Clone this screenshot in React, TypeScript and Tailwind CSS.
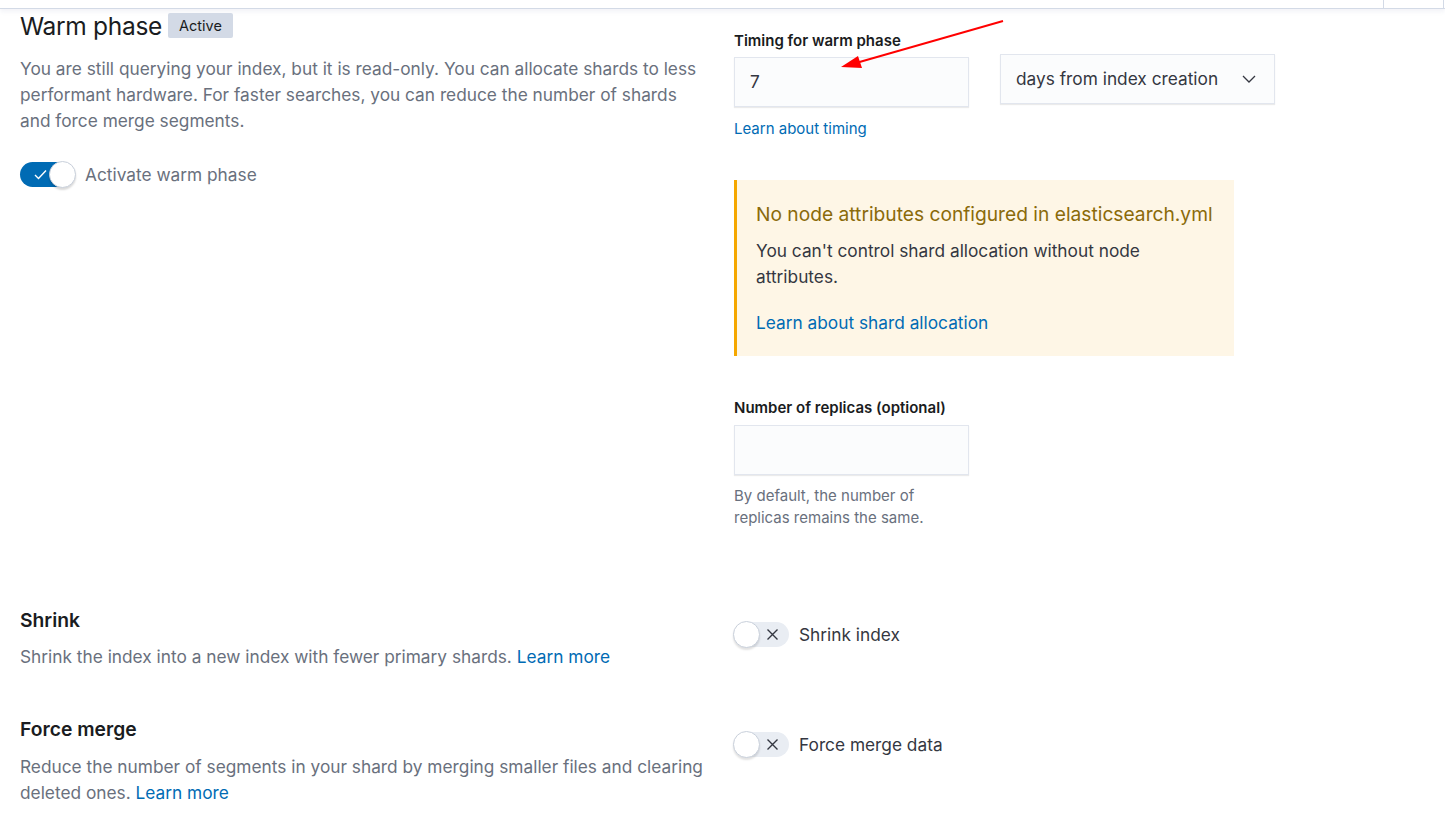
import React from "react";

const font = { fontFamily: "Inter, 'Noto Sans', sans-serif" };

const Switch = ({ on, label, dark }: { on: boolean; label: string; dark?: boolean }) => (
  <div className="flex items-center gap-[10px]">
    <div
      className={`relative h-[25px] w-[55px] shrink-0 rounded-full ${on ? "bg-[#006bb4]" : "bg-[#e9edf3]"}`}
    >
      {on ? (
        <>
          <svg className="absolute left-[14px] top-[7px]" width="13" height="11" viewBox="0 0 13 11" fill="none">
            <path d="M1 6 L4.5 9.5 L12 1.5" stroke="white" strokeWidth="1.4" />
          </svg>
          <div className="absolute right-[-1px] top-[-1px] h-[27px] w-[27px] rounded-full border border-[#c9d0db] bg-white shadow-[0_2px_2px_rgba(0,0,0,0.15)]" />
        </>
      ) : (
        <>
          <div className="absolute left-[-1px] top-[-1px] h-[27px] w-[27px] rounded-full border border-[#c9d0db] bg-white shadow-[0_2px_2px_rgba(0,0,0,0.12)]" />
          <svg className="absolute left-[32px] top-[6px]" width="13" height="13" viewBox="0 0 13 13" fill="none">
            <path d="M1.5 1.5 L11.5 11.5 M11.5 1.5 L1.5 11.5" stroke="#343741" strokeWidth="1.4" />
          </svg>
        </>
      )}
    </div>
    <span className={`text-[17.3px] leading-[24px] ${dark ? "text-[#343741]" : "text-[#69707d]"}`}>{label}</span>
  </div>
);

const FieldBox = ({ children, className }: { children?: React.ReactNode; className?: string }) => (
  <div
    className={`flex items-center border border-[#e2e6ee] bg-[#fbfcfd] shadow-[0_1px_1px_rgba(0,0,0,0.08)] ${className ?? ""}`}
  >
    {children}
  </div>
);

export default function App() {
  return (
    <div className="relative min-h-screen bg-white text-[#1a1c21]" style={font}>
      {/* top strip */}
      <div className="flex h-[9px] justify-end border-b border-[#d3dae6] shadow-[0_3px_4px_rgba(100,110,160,0.08)]">
        <div className="w-[60px] border-l border-[#d3dae6]" />
        <div className="w-[2px] border-l border-[#d3dae6]" />
      </div>

      <div className="pl-[20px]">
        {/* Warm phase */}
        <div className="grid grid-cols-[700px_1fr] gap-x-[14px]">
          <div className="pt-[1px]">
            <div className="flex items-center gap-[6px]">
              <h2 className="text-[24.5px] leading-[32px] font-normal tracking-[-0.3px]">Warm phase</h2>
              <span className="mt-[-2px] rounded-[2px] bg-[#d3dae6] px-[11px] text-[14.5px] leading-[25px]">
                Active
              </span>
            </div>
            <p className="mt-[14px] text-[17.3px] leading-[26px] text-[#69707d]">
              You are still querying your index, but it is read-only. You can allocate shards to less
              <br />
              performant hardware. For faster searches, you can reduce the number of shards
              <br />
              and force merge segments.
            </p>
            <div className="mt-[28px]">
              <Switch on label="Activate warm phase" />
            </div>
          </div>

          <div className="pt-[22px]">
            <div className="text-[15px] font-semibold leading-[20px]">Timing for warm phase</div>
            <div className="mt-[3px] flex items-start gap-[31px]">
              <FieldBox className="mt-[3px] h-[50px] w-[235px] px-[15px] text-[17.3px] text-[#343741]">7</FieldBox>
              <FieldBox className="h-[50px] w-[275px] justify-between pl-[15px] pr-[18px] text-[17.3px] text-[#343741]">
                <span>days from index creation</span>
                <svg width="14" height="8" viewBox="0 0 14 8" fill="none">
                  <path d="M1 1 L7 7 L13 1" stroke="#343741" strokeWidth="1.3" />
                </svg>
              </FieldBox>
            </div>
            <a className="mt-[12px] block text-[15px] leading-[20px] text-[#006bb4]">Learn about timing</a>

            <div className="mt-[41px] w-[500px] border-l-[3px] border-[#f5a700] bg-[#fef6e6] pb-[20px] pl-[19px] pr-[20px] pt-[22px]">
              <div className="text-[19.2px] leading-[24px] text-[#8a6a0a]">
                No node attributes configured in elasticsearch.yml
              </div>
              <p className="mt-[12px] text-[17.3px] leading-[26px] text-[#343741]">
                You can't control shard allocation without node attributes.
              </p>
              <a className="mt-[20px] block text-[17.3px] leading-[26px] text-[#006bb4]">
                Learn about shard allocation
              </a>
            </div>

            <div className="mt-[44px] text-[15px] font-semibold leading-[16px]">Number of replicas (optional)</div>
            <FieldBox className="mt-[9px] h-[50px] w-[235px]" />
            <p className="mt-[10px] w-[234px] text-[15px] leading-[22px] text-[#69707d]">
              By default, the number of replicas remains the same.
            </p>
          </div>
        </div>

        {/* Shrink */}
        <div className="mt-[79px] grid grid-cols-[700px_1fr] gap-x-[14px]">
          <div>
            <h3 className="text-[19.3px] font-semibold leading-[24px]">Shrink</h3>
            <p className="mt-[12px] text-[17.3px] leading-[26px] text-[#69707d]">
              Shrink the index into a new index with fewer primary shards.{" "}
              <a className="text-[#006bb4]">Learn more</a>
            </p>
          </div>
          <div className="pt-[14px]">
            <Switch on={false} label="Shrink index" dark />
          </div>
        </div>

        {/* Force merge */}
        <div className="mt-[47px] grid grid-cols-[700px_1fr] gap-x-[14px]">
          <div>
            <h3 className="text-[19.3px] font-semibold leading-[24px]">Force merge</h3>
            <p className="mt-[13px] text-[17.3px] leading-[26px] text-[#69707d]">
              Reduce the number of segments in your shard by merging smaller files and clearing
              <br />
              deleted ones. <a className="text-[#006bb4]">Learn more</a>
            </p>
          </div>
          <div className="pt-[15px]">
            <Switch on={false} label="Force merge data" dark />
          </div>
        </div>
      </div>

      {/* annotation arrow */}
      <svg className="pointer-events-none absolute left-0 top-0" width="1445" height="120">
        <line x1="1003" y1="21" x2="856" y2="63" stroke="#ff0000" strokeWidth="2" />
        <polygon points="841,67 858,56 862,68" fill="#ff0000" />
      </svg>
    </div>
  );
}
